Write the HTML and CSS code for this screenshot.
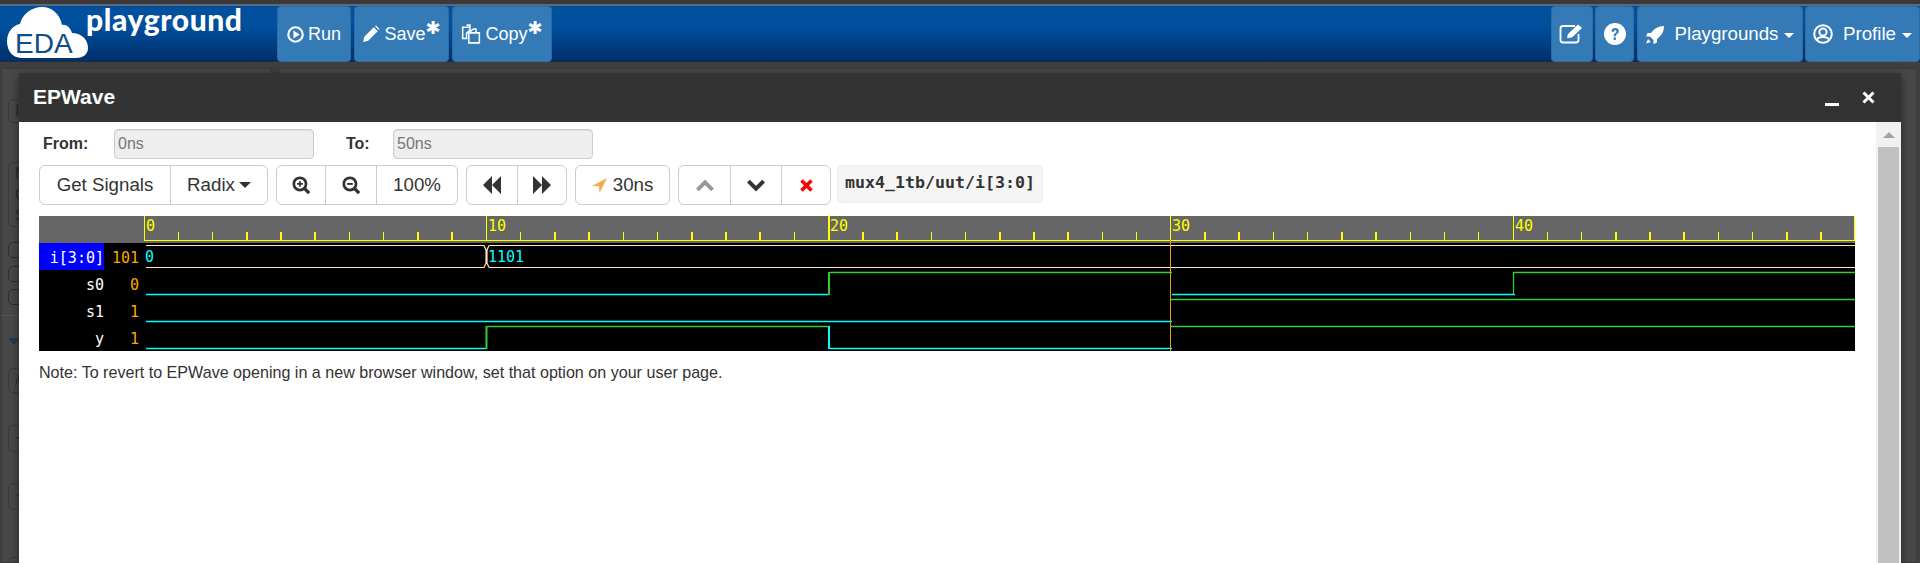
FILE: index.html
```html
<!DOCTYPE html>
<html>
<head>
    <meta charset="UTF-8">
    <title>EDA Playground</title>
    <link rel="stylesheet" href="styles.css">
</head>
<body>
    <div class="topStrip"></div>
    <nav class="navbar">
        <div class="logo">
            <svg class="cloud" width="84" height="54" viewBox="0 0 84 54">
                <path d="M16 51 C5 51 1 42 1 34 C1 24 8 18 14 17 C16 7 26 0 36 0 C46 0 54 7 56 18 C60 17 64 20 66 26 C76 26 82 33 82 41 C82 48 76 51 70 51 Z" fill="#fff"/>
            </svg>
            <span class="edaText">EDA</span>
            <span class="playText">playground</span>
        </div>
        <div class="navGroup">
            <button class="navBtn runBtn">
                <svg width="17" height="17" viewBox="0 0 16 16"><circle cx="8" cy="8" r="6.8" fill="none" stroke="#fff" stroke-width="2"/><path d="M6 4.2 L12 8 L6 11.8 Z" fill="#fff"/></svg>
                Run
            </button>
            <button class="navBtn saveBtn">
                <svg width="18" height="18" viewBox="0 0 16 16"><path d="M1 15 L2 10.5 L10.5 2 L14 5.5 L5.5 14 Z M11.5 1 L12.5 0.5 L15.5 3.5 L15 4.5 Z" fill="#fff"/></svg>
                Save<span class="star">✱</span>
            </button>
            <button class="navBtn copyBtn">
                <svg width="20" height="20" viewBox="0 0 18 18"><path d="M1.5 3 H8 V5.5 L5 8.5 V13 H1.5 Z M5 1 H8 V3 M7 8 H16.5 V17 H7 Z M7 8 L11 4.5 H13.5 V8" fill="none" stroke="#fff" stroke-width="1.4"/></svg>
                Copy<span class="star">✱</span>
            </button>
        </div>
        <div class="navGroup navRight">
            <button class="navBtn editBtn">
                <svg width="26" height="22" viewBox="0 0 26 22"><path d="M16 3 H4 Q1.5 3 1.5 5.5 V17 Q1.5 19.5 4 19.5 H17 Q19.5 19.5 19.5 17 V11" fill="none" stroke="#fff" stroke-width="1.8"/><path d="M8 15 L9 11 L19 1.5 L23 5 L13 14.5 Z" fill="#fff"/></svg>
            </button>
            <button class="navBtn helpBtn">
                <svg width="22" height="22" viewBox="0 0 22 22"><circle cx="11" cy="11" r="11" fill="#fff"/><path d="M7.5 8.5 C7.5 3.8 14.8 4 14.8 8.3 C14.8 11 11.8 10.8 11.8 13.2 H9.6 C9.6 9.8 12.4 10 12.4 8.4 C12.4 6.8 10 6.8 9.6 9 Z" fill="#337ab7"/><rect x="9.6" y="14.4" width="2.3" height="2.5" fill="#337ab7"/></svg>
            </button>
            <button class="navBtn playBtn">
                <svg width="19" height="19" viewBox="0 0 19 19"><path d="M18 1 C12 1 8 4 5 8 H1.5 L0 11.5 H4 L7.5 15 V19 L11 17.5 V14 C15 11 18 7 18 1 Z M2 14 L0 18.5 L5 17 Z" fill="#fff"/></svg>
                Playgrounds<i class="caret"></i>
            </button>
            <button class="navBtn profileBtn">
                <svg width="20" height="20" viewBox="0 0 20 20"><circle cx="10" cy="10" r="8.8" fill="none" stroke="#fff" stroke-width="2"/><circle cx="10" cy="8" r="3.6" fill="none" stroke="#fff" stroke-width="2"/><path d="M4 16 C5 12 15 12 16 16" fill="none" stroke="#fff" stroke-width="2"/></svg>
                Profile<i class="caret"></i>
            </button>
        </div>
    </nav>

    <!-- page behind the dialog -->
    <div class="ghostPanel"></div>
    <div class="ghostPanel right"></div>
    <div class="ghost g1">I</div>
    <div class="ghost g2">M<br>O<br>S</div>
    <div class="ghost g3"></div>
    <div class="ghost g4"></div>
    <div class="ghost g5"></div>
    <div class="ghostLine"></div>
    <div class="ghostArrow"></div>
    <div class="ghost g6">A</div>
    <div class="ghost g7">-t</div>
    <div class="ghost g8">+</div>
    <div class="ghost g9"></div>

    <div class="modal">
        <div class="modalHeader">
            <span class="modalTitle">EPWave</span>
            <span class="minBtn"></span>
            <svg class="closeBtn" width="13" height="13" viewBox="0 0 13 13"><path d="M1.5 1.5 L11.5 11.5 M11.5 1.5 L1.5 11.5" stroke="#fff" stroke-width="3"/></svg>
        </div>
        <div class="modalBody">
            <div class="content">
                <div class="rangeRow">
                    <label class="fromLabel">From:</label>
                    <input class="rangeInput fromInput" value="0ns" disabled>
                    <label class="toLabel">To:</label>
                    <input class="rangeInput toInput" value="50ns" disabled>
                </div>
                <div class="toolRow">
                    <div class="btnGroup">
                        <button class="toolBtn w132">Get Signals</button>
                        <button class="toolBtn w98">Radix<i class="caret dark"></i></button>
                    </div>
                    <div class="btnGroup">
                        <button class="toolBtn w50">
                            <svg width="19" height="19" viewBox="0 0 18 18"><circle cx="7.5" cy="7.5" r="5.8" fill="none" stroke="#333" stroke-width="2.6"/><path d="M11.5 11.5 L16.2 16.2" stroke="#333" stroke-width="3.2"/><path d="M4.8 7.5 H10.2 M7.5 4.8 V10.2" stroke="#333" stroke-width="1.6"/></svg>
                        </button>
                        <button class="toolBtn w51">
                            <svg width="19" height="19" viewBox="0 0 18 18"><circle cx="7.5" cy="7.5" r="5.8" fill="none" stroke="#333" stroke-width="2.6"/><path d="M11.5 11.5 L16.2 16.2" stroke="#333" stroke-width="3.2"/><path d="M4.8 7.5 H10.2" stroke="#333" stroke-width="1.8"/></svg>
                        </button>
                        <button class="toolBtn w80">100%</button>
                    </div>
                    <div class="btnGroup">
                        <button class="toolBtn w51">
                            <svg width="20" height="18" viewBox="0 0 17 16"><path d="M8.5 0 V16 L0.5 8 Z M16.5 0 V16 L8.5 8 Z" fill="#333"/></svg>
                        </button>
                        <button class="toolBtn w50">
                            <svg width="20" height="18" viewBox="0 0 17 16"><path d="M0.5 0 V16 L8.5 8 Z M8.5 0 V16 L16.5 8 Z" fill="#333"/></svg>
                        </button>
                    </div>
                    <button class="toolBtn single cursorBtn">
                        <svg width="15" height="15" viewBox="0 0 15 15"><path d="M15 0 L0 8 L7 8.2 L7.5 15 Z" fill="#f0ad4e"/></svg>
                        30ns
                    </button>
                    <div class="btnGroup">
                        <button class="toolBtn w52">
                            <svg width="20" height="13" viewBox="0 0 18 12"><path d="M2 10 L9 3 L16 10" fill="none" stroke="#999" stroke-width="3.6"/></svg>
                        </button>
                        <button class="toolBtn w51">
                            <svg width="20" height="13" viewBox="0 0 18 12"><path d="M2 2 L9 9 L16 2" fill="none" stroke="#333" stroke-width="3.6"/></svg>
                        </button>
                        <button class="toolBtn w49">
                            <svg width="13" height="13" viewBox="0 0 13 13"><path d="M1.5 1.5 L11.5 11.5 M11.5 1.5 L1.5 11.5" stroke="#f00" stroke-width="3.6"/></svg>
                        </button>
                    </div>
                    <code class="signalPath">mux4_1tb/uut/i[3:0]</code>
                </div>

                <div class="waveBox">
                    <svg class="wave" width="1816" height="135" viewBox="39 216 1816 135">
                        <rect x="39" y="216" width="1816" height="27" fill="#666"/>
                        <rect x="39" y="243" width="1816" height="108" fill="#000"/>
                        <rect x="39" y="243" width="65" height="27" fill="#00f"/>

                        <!-- time scale -->
                        <path class="tick" d="M178.5 232V240 M212.5 232V240 M247 232V240 M281 232V240 M315 232V240 M349.5 232V240 M383.5 232V240 M418 232V240 M452 232V240
                            M520.5 232V240 M555 232V240 M589 232V240 M623.5 232V240 M657.5 232V240 M692 232V240 M726 232V240 M760 232V240 M794.5 232V240
                            M863 232V240 M897 232V240 M931.5 232V240 M965.5 232V240 M1000 232V240 M1034 232V240 M1068 232V240 M1102.5 232V240 M1136.5 232V240
                            M1205 232V240 M1239 232V240 M1273.5 232V240 M1307.5 232V240 M1342 232V240 M1376 232V240 M1410.5 232V240 M1444.5 232V240 M1478.5 232V240
                            M1547.5 232V240 M1581.5 232V240 M1616 232V240 M1650 232V240 M1684 232V240 M1718.5 232V240 M1752.5 232V240 M1787 232V240 M1821 232V240"/>
                        <path class="major" d="M144.5 216V241 M486.5 216V241 M829 216V241 M1170.5 216V241 M1513.5 216V241 M1854.5 216V241 M144 240.5H1855"/>
                        <text class="scaleText" x="146" y="231">0</text>
                        <text class="scaleText" x="488" y="231">10</text>
                        <text class="scaleText" x="830" y="231">20</text>
                        <text class="scaleText" x="1172" y="231">30</text>
                        <text class="scaleText" x="1515" y="231">40</text>

                        <!-- signal names and values -->
                        <text class="name" x="104" y="263">i[3:0]</text>
                        <text class="name" x="104" y="290">s0</text>
                        <text class="name" x="104" y="317">s1</text>
                        <text class="name" x="104" y="344">y</text>
                        <text class="value" x="139" y="263">101</text>
                        <text class="value" x="139" y="290">0</text>
                        <text class="value" x="139" y="317">1</text>
                        <text class="value" x="139" y="344">1</text>

                        <!-- bus i[3:0] -->
                        <path class="bus" d="M146 245.5H484L486 250V263L484 267.5H146 M489 245.5H1855 M489 267.5H1855 M489 245.5L487 250V263L489 267.5"/>
                        <text class="busText" x="145" y="262">0</text>
                        <text class="busText" x="488" y="262">1101</text>

                        <!-- s0 -->
                        <path class="low" d="M146 294.5H829 M1172 294.5H1515"/>
                        <path class="high" d="M830 272.5H1172 M1513.5 294V272.5H1855"/>
                        <path class="high step" d="M829 295V272"/>
                        <!-- s1 -->
                        <path class="low" d="M146 321.5H1172"/>
                        <path class="high" d="M1170 299.5H1855"/>
                        <!-- y -->
                        <path class="low" d="M146 348.5H486"/>
                        <path class="high step" d="M486.5 349V326"/>
                        <path class="high" d="M487 326.5H829"/>
                        <path class="low step" d="M829 326V349"/>
                        <path class="low" d="M830 348.5H1172"/>
                        <path class="high" d="M1170 326.5H1855"/>

                        <path class="cursor" d="M1170.5 240V351"/>
                    </svg>
                </div>
                <p class="note">Note: To revert to EPWave opening in a new browser window, set that option on your user page.</p>
            </div>
            <div class="scrollbar">
                <div class="scrollArrow"></div>
                <div class="scrollThumb"></div>
            </div>
        </div>
    </div>
</body>
</html>
```

FILE: styles.css
```css
* {
    box-sizing: border-box;
}

html, body {
    height: 563px;
    overflow: hidden;
}

body {
    margin: 0;
    background-color: #3f3f3f;
    font-family: "Liberation Sans", Arial, sans-serif;
    color: #333;
    position: relative;
}

.topStrip {
    height: 6px;
    background: linear-gradient(#3a3a3a 0, #3a3a3a 4px, #5a6a7c 4px);
}

.navbar {
    display: flex;
    justify-content: space-between;
    height: 56px;
    background: linear-gradient(#00509e 0, #00509e 35%, #002f6c 100%);
    border-bottom: 1px solid #1d2a38;
    position: relative;
}

.logo {
    position: absolute;
    left: 0;
    top: 0;
    width: 270px;
    height: 56px;
}

.cloud {
    position: absolute;
    left: 6px;
    top: 1px;
}

.edaText {
    position: absolute;
    left: 15px;
    top: 22px;
    font-size: 28px;
    color: #0f4c8a;
}

.playText {
    position: absolute;
    left: 86px;
    top: -5px;
    font-family: Lato, sans-serif;
    font-weight: 900;
    font-size: 30px;
    letter-spacing: 0.6px;
    color: #fff;
}

.navGroup {
    display: flex;
    gap: 3px;
    margin-left: 277px;
}

.navRight {
    margin-left: 0;
}

.navBtn {
    display: flex;
    align-items: center;
    justify-content: center;
    gap: 4px;
    height: 56px;
    padding: 0;
    border: 1px solid #2e6da4;
    border-radius: 4px;
    background-color: #337ab7;
    color: #fff;
    font-family: "Liberation Sans", Arial, sans-serif;
    font-size: 18px;
}

.runBtn { width: 74px; }
.saveBtn { width: 95px; }
.copyBtn { width: 100px; }
.editBtn { width: 42px; }
.helpBtn { width: 39px; margin-left: -1px; }
.playBtn { width: 166px; gap: 10px; font-size: 18.7px; }
.profileBtn { width: 115px; gap: 10px; margin-left: -1px; font-size: 18.7px; }

.star {
    font-family: "DejaVu Sans", sans-serif;
    font-size: 18px;
    line-height: 16px;
    margin-left: -4px;
    align-self: flex-start;
    margin-top: 13px;
}

.caret {
    display: inline-block;
    width: 0;
    height: 0;
    margin-left: -4px;
    margin-top: 3px;
    border-top: 5px solid #fff;
    border-left: 5px solid transparent;
    border-right: 5px solid transparent;
}

.caret.dark {
    margin-left: 4px;
    margin-top: 0;
    border-top: 6px solid #333;
    border-left-width: 6px;
    border-right-width: 6px;
}

.ghostPanel {
    position: absolute;
    left: 1px;
    top: 68px;
    width: 270px;
    height: 495px;
    background-color: #484848;
    border: 1px solid #3a3a3a;
}

.ghostPanel.right {
    left: 279px;
    width: 1638px;
}

.ghost {
    position: absolute;
    left: 8px;
    width: 30px;
    padding-left: 6px;
    border: 1px solid #3a3a3a;
    border-radius: 5px;
    color: #2c2c2c;
    font-size: 16px;
    line-height: 21px;
}

.g1 { top: 99px; height: 24px; }
.g2 { top: 162px; height: 65px; }
.g3 { top: 242px; height: 16px; border-color: #2e2e2e; }
.g4 { top: 266px; height: 16px; border-color: #2e2e2e; }
.g5 { top: 289px; height: 16px; border-color: #2e2e2e; }
.g6 { top: 368px; height: 25px; }
.g7 { top: 425px; height: 27px; }
.g8 { top: 483px; height: 27px; }
.g9 { top: 557px; height: 20px; }

.ghostLine {
    position: absolute;
    left: 1px;
    top: 315px;
    width: 30px;
    height: 1px;
    background-color: #555;
}

.ghostArrow {
    position: absolute;
    left: 8px;
    top: 338px;
    width: 0;
    height: 0;
    border-top: 7px solid #1d3a55;
    border-left: 6px solid transparent;
    border-right: 6px solid transparent;
}

.modal {
    position: absolute;
    left: 19px;
    top: 73px;
    width: 1882px;
    height: 490px;
    display: flex;
    flex-direction: column;
    background-color: #fff;
    box-shadow: 0 3px 9px rgba(0, 0, 0, 0.5);
}

.modalHeader {
    position: relative;
    height: 49px;
    flex: none;
    background-color: #333;
    color: #fff;
}

.modalTitle {
    position: absolute;
    left: 14px;
    top: 12px;
    font-size: 21px;
    font-weight: bold;
}

.minBtn {
    position: absolute;
    left: 1806px;
    top: 30px;
    width: 14px;
    height: 3px;
    background-color: #fff;
}

.closeBtn {
    position: absolute;
    left: 1843px;
    top: 18px;
}

.modalBody {
    flex: 1;
    display: flex;
    min-height: 0;
}

.content {
    flex: 1;
    padding: 7px 0 0 20px;
}

.rangeRow {
    display: flex;
    align-items: center;
    height: 30px;
}

.rangeRow label {
    font-size: 16px;
    font-weight: bold;
}

.fromLabel { margin-left: 4px; width: 71px; }
.toLabel { margin-left: 32px; width: 47px; }

.rangeInput {
    width: 200px;
    height: 30px;
    padding: 0 3px;
    border: 1px solid #ccc;
    border-radius: 4px;
    background-color: #eee;
    color: #777;
    font-family: "Liberation Sans", Arial, sans-serif;
    font-size: 16px;
    box-shadow: inset 0 1px 1px rgba(0, 0, 0, 0.075);
}

.toolRow {
    display: flex;
    align-items: flex-start;
    gap: 8px;
    margin-top: 6px;
    height: 40px;
}

.btnGroup {
    display: flex;
}

.toolBtn {
    display: flex;
    align-items: center;
    justify-content: center;
    height: 40px;
    padding: 0;
    background-color: #fff;
    border: 1px solid #ccc;
    margin-left: -1px;
    color: #333;
    font-family: "Liberation Sans", Arial, sans-serif;
    font-size: 18.7px;
}

.btnGroup .toolBtn:first-child {
    margin-left: 0;
    border-radius: 6px 0 0 6px;
}

.btnGroup .toolBtn:last-child {
    border-radius: 0 6px 6px 0;
}

.w49 { width: 50px; }
.w50 { width: 50px; }
.w51 { width: 52px; }
.w52 { width: 53px; }
.w80 { width: 82px; }
.w98 { width: 98px; }
.w132 { width: 132px; }

.single {
    border-radius: 6px;
    margin-left: 0;
}

.cursorBtn {
    width: 95px;
    gap: 6px;
}

.signalPath {
    display: block;
    width: 206px;
    height: 38px;
    margin-left: -2px;
    background-color: #f5f5f5;
    border: 1px solid #eee;
    border-radius: 4px;
    color: #333;
    font-family: "DejaVu Sans Mono", monospace;
    font-weight: bold;
    font-size: 16.6px;
    line-height: 34px;
    text-align: center;
}

.waveBox {
    margin-top: 11px;
    height: 135px;
}

.wave {
    display: block;
    font-family: "DejaVu Sans Mono", monospace;
    font-size: 15px;
}

.tick, .major {
    fill: none;
    stroke: #ff0;
    shape-rendering: crispEdges;
}

.tick { stroke-width: 1.4; }
.major { stroke-width: 1.6; }

.scaleText { fill: #ff0; }
.name { fill: #fff; text-anchor: end; }
.value { fill: #ffa500; text-anchor: end; }
.busText { fill: #0ff; }

.bus {
    fill: none;
    stroke: #ffe4c4;
    stroke-width: 1.2;
}

.low, .high {
    fill: none;
    stroke-width: 1.3;
}

.low { stroke: #0ff; }
.high { stroke: #32cd32; }
.step { stroke-width: 2; }

.cursor {
    stroke: #e59a1c;
    stroke-width: 1;
    fill: none;
}

.note {
    margin: 11px 0 0 0;
    font-size: 16.1px;
    line-height: 20px;
    color: #333;
}

.scrollbar {
    width: 25px;
    flex: none;
    background-color: #f1f1f1;
    display: flex;
    flex-direction: column;
    align-items: center;
}

.scrollArrow {
    margin-top: 10px;
    width: 0;
    height: 0;
    border-bottom: 6px solid #a3a3a3;
    border-left: 6px solid transparent;
    border-right: 6px solid transparent;
}

.scrollThumb {
    margin: 9px 2px 0;
    align-self: stretch;
    flex: 1;
    background-color: #c1c1c1;
}
```
